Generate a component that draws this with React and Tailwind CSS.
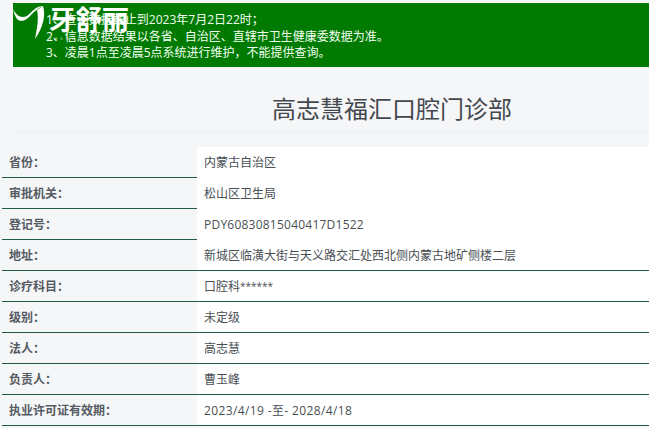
const font = { fontFamily: '"Open Sans", "Noto Sans CJK SC", sans-serif' };

const rows = [
  { label: '省份：', value: '内蒙古自治区', open: true },
  { label: '审批机关：', value: '松山区卫生局', open: true },
  { label: '登记号：', value: 'PDY60830815040417D1522', open: true, spacing: 'tracking-[0.23px]' },
  { label: '地址：', value: '新城区临潢大街与天义路交汇处西北侧内蒙古地矿侧楼二层' },
  {
    label: '诊疗科目：',
    value: (
      <>
        口腔科<span className="inline-block text-[10px] -translate-y-[1px]">******</span>
      </>
    ),
  },
  { label: '级别：', value: '未定级' },
  { label: '法人：', value: '高志慧' },
  { label: '负责人：', value: '曹玉峰' },
  { label: '执业许可证有效期：', value: '2023/4/19 -至- 2028/4/18', spacing: 'tracking-[0.38px]' },
];

const Row = ({ label, value, open, spacing = '' }) => (
  <div className="flex h-[31px]">
    <div className="w-[195px] flex items-center pl-[7px] pt-[2px] border-b border-[#1f5c42] text-[12px] font-bold text-[#555b63]">
      {label}
    </div>
    <div className={`flex-1 flex items-center pl-[7px] pt-px bg-white text-[12px] text-[#4a4f55] ${spacing} ${open ? '' : 'border-b border-[#1f5c42]'}`}>
      <span>{value}</span>
    </div>
  </div>
);

export default function App() {
  return (
    <div className="relative w-[649px] h-[428px] overflow-hidden bg-[#f5f6f7]" style={font}>
      {/* watermark */}
      <div className="absolute left-[13px] top-[4px] flex text-white">
        <svg width="32" height="36" viewBox="0 0 32 36" className="shrink-0">
          <path d="M0 5 C3 11 8 15 14 12 C19 8 23 2 30 2 C25 4 21 8 18 11 C14 16 8 19 4 15 C2 12 1 9 0 5 Z" fill="#fff" />
          <path d="M30 2 C33 11 30 24 22 35 C24 25 26 14 24 6 Z" fill="#fff" />
        </svg>
        <div className="ml-[4px] relative">
          <span className="block text-[27px] leading-[31px] font-bold whitespace-nowrap tracking-[-0.5px]">牙舒丽</span>
          <span className="block text-[5px] leading-[6px] tracking-[3px] opacity-70 whitespace-nowrap">yashuli</span>
        </div>
      </div>

      <div className="pl-[13px] pt-[3px]">
        <div className="h-[64px] bg-[#007a00] pl-[33px] pt-[9px] text-[12px] leading-[16.6px] text-[#f2fff2]">
          <p>1、查询数据截止到2023年7月2日22时；</p>
          <p>2、信息数据结果以各省、自治区、直辖市卫生健康委数据为准。</p>
          <p>3、凌晨1点至凌晨5点系统进行维护，不能提供查询。</p>
        </div>
        <div className="h-[66px] border-b border-[#eeeff0] flex items-center justify-center pl-[122px] pt-[18px]">
          <h1 className="text-[24px] text-[#44484e]">高志慧福汇口腔门诊部</h1>
        </div>
      </div>

      <div className="mt-[14px] ml-[2px]">
        {rows.map((row) => (
          <Row key={row.label} {...row} />
        ))}
      </div>
    </div>
  );
}
